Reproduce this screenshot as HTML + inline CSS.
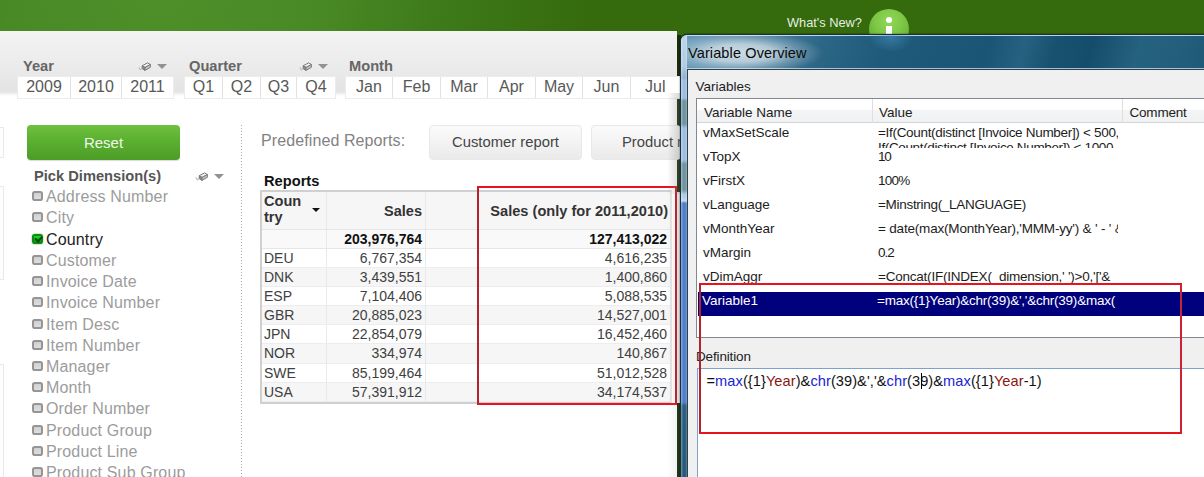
<!DOCTYPE html>
<html><head><meta charset="utf-8">
<style>
*{box-sizing:border-box;margin:0;padding:0}
html,body{width:1204px;height:477px;overflow:hidden}
body{position:relative;font-family:"Liberation Sans",sans-serif;background:#356b0d;}
.abs{position:absolute}
#green{left:0;top:0;width:1204px;height:477px;background:radial-gradient(ellipse 430px 260px at 160px 0px,#4f8f2a 0%,#4a8a26 35%,#3c7718 70%,#356b0d 100%);}
#sheet{left:0;top:31px;width:677px;height:446px;background:#fff;}
#topband{left:0;top:31px;width:677px;height:65px;background:linear-gradient(#f4f4f4 0,#f0f0f0 12px,#eaeaea 40px,#e3e3e3 60px,#e6e6e6 61px,#fff 65px);}
.lbtitle{position:absolute;font-weight:bold;color:#666;font-size:14.67px;line-height:16px;white-space:nowrap}
.cells{position:absolute;top:76px;height:23px;display:flex;border:1px solid #ececec;background:#fff}
.cells div{height:21px;line-height:19.4px;font-size:16px;color:#585858;text-align:center;border-right:1px solid #e2e2e2;background:#fff}
.cells div:last-child{border-right:none}
.tri{position:absolute;width:0;height:0;border-left:5.2px solid transparent;border-right:5.2px solid transparent;border-top:5.2px solid #929292}
.item{position:absolute;left:46px;font-size:16px;color:#9c9c9c;line-height:20px;letter-spacing:.15px;margin-top:.7px;white-space:nowrap}
.cb{position:absolute;left:32.3px;width:10.4px;height:10.4px;border:2px solid #959595;border-radius:2.8px;background:linear-gradient(#d0d0d0,#dedede)}

#reset{left:27px;top:125px;width:153px;height:35px;border-radius:4px;background:linear-gradient(#6fc03f,#5bb030 45%,#4c9c27);color:rgba(255,255,255,.93);font-size:15px;line-height:35.5px;text-align:center;box-shadow:0 1px 1px rgba(0,0,0,.15)}
.cb.on{background:linear-gradient(#16e02a,#0fb01c 55%,#0c9414);border-color:#0c8a12;box-shadow:0 0 1.5px #1aa01a}
.cb.on:after{content:"";position:absolute;left:1.5px;top:-0.6px;width:3.4px;height:5.4px;border-right:2.1px solid #0a450c;border-bottom:2.1px solid #0a450c;transform:rotate(42deg)}
.btn{position:absolute;top:125px;height:35px;border:1px solid #e8e8e8;border-radius:4px;background:linear-gradient(#fbfbfb,#f3f3f3 50%,#eaeaea);font-size:14.8px;line-height:33px;color:#444;text-align:center;white-space:nowrap;overflow:hidden}
#tbl{left:260px;top:190px;width:412px;border:2px solid #d0d0d0;border-right:2px solid #e6e6e6;background:#fff;font-size:14px;color:#404040}
#tbl>div{display:flex;position:relative}
#tbl .c1{width:65px;padding-left:2px;border-right:1px solid #e9e9e9;position:relative}
#tbl .c2{width:99px;text-align:right;padding-right:3px;border-right:1px solid #e9e9e9}
#tbl .c3{flex:1;text-align:right;padding-right:3px}
.hdr{height:37.5px;background:#f6f6f6;font-weight:bold;color:#333;border-bottom:1px solid #e6e6e6}
.tot{height:19px;line-height:19px;background:#f9f9f9;font-weight:bold;color:#111;border-bottom:1px solid #e6e6e6}
.row{height:19.2px;line-height:19px;border-bottom:1px solid #ededed}
.row.alt{background:#f6f6f6}

#whats{left:787px;top:15px;color:rgba(255,255,255,.9);font-size:12.8px;line-height:16px;white-space:nowrap}
#info{left:869px;top:9px;width:40px;height:40px;border-radius:50%;background:radial-gradient(circle at 50% 30%,#92d658 0%,#7ec846 40%,#64ae34 75%,#4f9a26 100%);}
#dlg{left:680px;top:34px;width:530px;height:451px;box-shadow:0 0 1.5px rgba(0,0,0,.8);border:1px solid #1a2f3a;border-radius:7px 0 0 0;background:#1f5876;overflow:hidden}
#tbar{left:0;top:0;width:530px;height:34px;background:linear-gradient(105deg,#8fb5cf 0px,#5f93b3 8px,#2c6686 140px,#1f5a7a 200px,#1b5575 300px,#256181 335px,#185170 365px,#154c6b 400px,#25627f 445px,#235f7d 485px,#1c5674 530px);box-shadow:inset 0 1px 0 rgba(220,235,245,.85),inset 0 -1px 0 rgba(190,215,232,.85)}
#tglow{left:-22px;top:-4px;width:164px;height:44px;background:radial-gradient(closest-side,rgba(255,255,255,.72) 0%,rgba(255,255,255,.6) 40%,rgba(255,255,255,.25) 70%,rgba(255,255,255,0) 100%)}
#ttext{left:7px;top:9px;letter-spacing:.12px;font-size:14.5px;line-height:18px;color:#0a0a0a;white-space:nowrap}
#lborder{left:0;top:1px;width:6px;height:450px;background:linear-gradient(90deg,rgba(255,255,255,.35),rgba(255,255,255,0) 40%,rgba(255,255,255,0) 70%,rgba(255,255,255,.25)),linear-gradient(#bcd5e8 0px,#b0cbe2 30px,#8fb0cf 42px,#9dbde3 44px,#9dbde3 62px,#6f949f 65px,#6f949f 88px,#9dbde3 92px,#9dbde3 124px,#6f949f 128px,#6f949f 154px,#a9c5e6 158px,#c4d6ec 165px,#4f7fcb 167px,#4f7fcb 366px,#2a5f7c 370px,#24587a 450px)}
#client{left:6px;top:34px;width:530px;height:420px;background:#f0f0f0;border:1px solid #30404a;border-right:none;border-bottom:none}
.dl{position:absolute;font-size:13.5px;line-height:16px;color:#1c1c1c;white-space:nowrap}
#lv{left:8px;top:28px;width:521px;height:240px;background:#fff;border:1px solid #828790;border-right:none}
#lvh{left:0;top:0;width:521px;height:24px;background:linear-gradient(#fff 0%,#fff 45%,#f3f4f5 50%,#f0f1f2 100%);border-bottom:1px solid #d5d5d5}
.sep{position:absolute;top:0;width:1px;height:24px;background:#dedfe0}
#sel{left:0px;top:192px;width:521px;height:24px;background:#00007c}
#edit{left:8.5px;top:298px;width:520px;height:130px;background:#fff;border:1px solid #7da2ce;border-right:none;border-bottom:none}
#code{left:9px;top:3px;letter-spacing:.07px;font-size:14.6px;line-height:18px;color:#111;white-space:nowrap}
#code b{font-weight:normal;color:#2024d4}
#code i{font-style:normal;color:#8a1515}
</style></head><body>
<div id="green" class="abs"></div>
<div class="abs" style="left:676px;top:35px;width:5px;height:442px;background:#1b2e0c"></div>
<div id="left" class="abs" style="left:0;top:0;width:680px;height:477px;overflow:hidden">
<div id="sheet" class="abs"></div>
<div id="topband" class="abs"></div>
<div class="abs" style="left:677px;top:192px;width:3px;height:211px;background:#e9e9e9"></div>
<div class="abs" style="left:677px;top:35px;width:3px;height:442px;z-index:-1"></div>

<!-- list boxes -->
<div class="lbtitle" style="left:23px;top:58px">Year</div>
<div class="lbtitle" style="left:189px;top:58px">Quarter</div>
<div class="lbtitle" style="left:349px;top:58px">Month</div>
<div class="cells" style="left:17px;width:157px"><div style="width:53px">2009</div><div style="width:51px">2010</div><div style="width:51px">2011</div></div>
<div class="cells" style="left:184px;width:152px"><div style="width:38px">Q1</div><div style="width:38px">Q2</div><div style="width:36px">Q3</div><div style="width:38px">Q4</div></div>
<div class="cells" style="left:345px;width:336px;border-right:none"><div style="width:47px">Jan</div><div style="width:48px">Feb</div><div style="width:47px">Mar</div><div style="width:48px">Apr</div><div style="width:47px">May</div><div style="width:48px">Jun</div><div style="width:50px;border-right:none;text-align:left;padding-left:14px">Jul</div></div>
<svg class="abs" style="left:138px;top:62px" width="14" height="10" viewBox="0 0 14 10"><path d="M0.8 5.2 L2.3 8 L4.2 6.4" fill="none" stroke="#bdbdbd" stroke-width="1.1"/><path d="M4.2 3.7 L9.6 0.9 L12.4 2.5 L7 5.5 Z" fill="#f2f2f2" stroke="#7a7a7a" stroke-width="1"/><path d="M4.2 3.7 L7 5.5 L7 8.4 L4.2 6.6 Z" fill="#8c8c8c" stroke="#7a7a7a" stroke-width="1"/><path d="M7 5.5 L12.4 2.5 L12.4 5.3 L7 8.4 Z" fill="#c4c4c4" stroke="#7a7a7a" stroke-width="1"/></svg><svg class="abs" style="left:299px;top:62px" width="14" height="10" viewBox="0 0 14 10"><path d="M0.8 5.2 L2.3 8 L4.2 6.4" fill="none" stroke="#bdbdbd" stroke-width="1.1"/><path d="M4.2 3.7 L9.6 0.9 L12.4 2.5 L7 5.5 Z" fill="#f2f2f2" stroke="#7a7a7a" stroke-width="1"/><path d="M4.2 3.7 L7 5.5 L7 8.4 L4.2 6.6 Z" fill="#8c8c8c" stroke="#7a7a7a" stroke-width="1"/><path d="M7 5.5 L12.4 2.5 L12.4 5.3 L7 8.4 Z" fill="#c4c4c4" stroke="#7a7a7a" stroke-width="1"/></svg><svg class="abs" style="left:195px;top:172px" width="14" height="10" viewBox="0 0 14 10"><path d="M0.8 5.2 L2.3 8 L4.2 6.4" fill="none" stroke="#bdbdbd" stroke-width="1.1"/><path d="M4.2 3.7 L9.6 0.9 L12.4 2.5 L7 5.5 Z" fill="#f2f2f2" stroke="#7a7a7a" stroke-width="1"/><path d="M4.2 3.7 L7 5.5 L7 8.4 L4.2 6.6 Z" fill="#8c8c8c" stroke="#7a7a7a" stroke-width="1"/><path d="M7 5.5 L12.4 2.5 L12.4 5.3 L7 8.4 Z" fill="#c4c4c4" stroke="#7a7a7a" stroke-width="1"/></svg>
<div class="tri" style="left:157px;top:64px"></div>
<div class="tri" style="left:318.3px;top:64px"></div>


<!-- left panel -->
<div class="abs" style="left:0;top:127px;width:4px;height:31px;border:1px solid #e9e9e9;border-left:none;background:#fdfdfd"></div>
<div class="abs" style="left:0;top:186px;width:4px;height:94px;border:1px solid #e9e9e9;border-left:none;background:#fdfdfd"></div>
<div class="abs" style="left:0;top:364px;width:4px;height:120px;border:1px solid #e9e9e9;border-left:none;background:#fdfdfd"></div>
<div class="abs" id="reset">Reset</div>
<div class="lbtitle" style="left:34px;top:168px;color:#555">Pick Dimension(s)</div>
<div class="tri" style="left:214px;top:174px"></div>
<div class="cb" style="top:191px"></div><div class="item" style="top:186px">Address Number</div>
<div class="cb" style="top:212px"></div><div class="item" style="top:207px">City</div>
<div class="cb on" style="top:234px"></div><div class="item" style="top:229px;color:#222">Country</div>
<div class="cb" style="top:255px"></div><div class="item" style="top:250px">Customer</div>
<div class="cb" style="top:276px"></div><div class="item" style="top:271px">Invoice Date</div>
<div class="cb" style="top:297px"></div><div class="item" style="top:292px">Invoice Number</div>
<div class="cb" style="top:319px"></div><div class="item" style="top:314px">Item Desc</div>
<div class="cb" style="top:340px"></div><div class="item" style="top:335px">Item Number</div>
<div class="cb" style="top:361px"></div><div class="item" style="top:356px">Manager</div>
<div class="cb" style="top:382px"></div><div class="item" style="top:377px">Month</div>
<div class="cb" style="top:403px"></div><div class="item" style="top:398px">Order Number</div>
<div class="cb" style="top:425px"></div><div class="item" style="top:420px">Product Group</div>
<div class="cb" style="top:446px"></div><div class="item" style="top:441px">Product Line</div>
<div class="cb" style="top:467px"></div><div class="item" style="top:462px">Product Sub Group</div>

<!-- center -->
<div class="abs" style="left:241px;top:125px;height:352px;background:repeating-linear-gradient(#aaa 0,#aaa 1px,transparent 1px,transparent 3px);width:1px"></div>
<div class="abs" style="left:261px;top:131px;font-size:16px;line-height:20px;color:#828282;letter-spacing:0.1px;white-space:nowrap">Predefined Reports:</div>
<div class="btn" style="left:429px;width:153px">Customer report</div>
<div class="btn" style="left:591px;width:90px;text-align:left;padding-left:30px">Product r</div>
<div class="abs" style="left:264px;top:173px;font-weight:bold;font-size:14.67px;line-height:16px;color:#111">Reports</div>
<div id="tbl" class="abs">
 <div class="hdr">
  <div class="c1" style="line-height:16px;padding-top:1px;font-size:14.6px">Coun<br>try<span class="abs" style="left:50px;top:16px;width:0;height:0;border-left:4px solid transparent;border-right:4px solid transparent;border-top:4px solid #111"></span></div>
  <div class="c2" style="line-height:38px;font-size:14.5px">Sales</div>
  <div class="c3" style="line-height:38px;font-size:14.6px;letter-spacing:0;padding-right:2px">Sales (only for 2011,2010)</div>
 </div>
 <div class="tot"><div class="c1"></div><div class="c2">203,976,764</div><div class="c3">127,413,022</div></div>
 <div class="row"><div class="c1">DEU</div><div class="c2">6,767,354</div><div class="c3">4,616,235</div></div>
 <div class="row alt"><div class="c1">DNK</div><div class="c2">3,439,551</div><div class="c3">1,400,860</div></div>
 <div class="row"><div class="c1">ESP</div><div class="c2">7,104,406</div><div class="c3">5,088,535</div></div>
 <div class="row alt"><div class="c1">GBR</div><div class="c2">20,885,023</div><div class="c3">14,527,001</div></div>
 <div class="row"><div class="c1">JPN</div><div class="c2">22,854,079</div><div class="c3">16,452,460</div></div>
 <div class="row alt"><div class="c1">NOR</div><div class="c2">334,974</div><div class="c3">140,867</div></div>
 <div class="row"><div class="c1">SWE</div><div class="c2">85,199,464</div><div class="c3">51,012,528</div></div>
 <div class="row alt"><div class="c1">USA</div><div class="c2">57,391,912</div><div class="c3">34,174,537</div></div>
</div>
<div class="abs" style="left:477px;top:186px;width:199.5px;height:219px;border:2px solid #e6141c;border-left-color:#b4222e;border-right-color:#c41c26"></div>

<div class="abs" style="left:667px;top:93px;width:13px;height:101px;background:linear-gradient(90deg,rgba(120,120,120,0),rgba(120,120,120,.24) 80%)"></div>
<div class="abs" style="left:667px;top:194px;width:13px;height:283px;background:linear-gradient(90deg,rgba(120,120,120,0),rgba(120,120,120,.10) 80%)"></div>
</div>
<!-- header right -->
<div id="whats" class="abs">What's New?</div>
<div id="info" class="abs"><div class="abs" style="left:17px;top:8px;width:6px;height:6px;border-radius:50%;background:#fff"></div><div class="abs" style="left:17.2px;top:16.5px;width:5.6px;height:16px;background:#fff"></div></div>
<!-- dialog -->
<div id="dlg" class="abs">
 <div id="tbar" class="abs"></div>
 <div class="abs" style="left:188px;top:-13px;width:44px;height:30px;background:radial-gradient(closest-side,rgba(80,150,200,.5),rgba(80,150,200,0))"></div>
 <div id="tglow" class="abs"></div>
 <div id="ttext" class="abs">Variable Overview</div>
 <div id="lborder" class="abs"></div>
 <div id="client" class="abs">
  <div class="dl" style="left:7.5px;top:9px">Variables</div>
  <div id="lv" class="abs">
   <div id="lvh" class="abs"><div class="sep" style="left:175px"></div><div class="sep" style="left:425px"></div>
    <div class="dl" style="left:7px;top:5.5px">Variable Name</div><div class="dl" style="left:182px;top:5.5px">Value</div><div class="dl" style="left:432.5px;top:5.5px;letter-spacing:-.2px">Comment</div></div>
   <div class="abs" style="left:1px;top:1px;width:519px;height:238px">
   <div class="dl" style="left:5px;top:25px">vMaxSetScale</div><div class="dl v" style="letter-spacing:-0.310px;left:180px;top:25px;width:239.5px;overflow:hidden">=If(Count(distinct [Invoice Number]) &lt; 500,</div>
   <div class="dl" style="left:5px;top:49px">vTopX</div><div class="dl v" style="letter-spacing:-1.200px;left:180px;top:49px;width:239.5px;overflow:hidden">10</div>
   <div class="dl" style="left:5px;top:73px">vFirstX</div><div class="dl v" style="letter-spacing:-0.730px;left:180px;top:73px;width:239.5px;overflow:hidden">100%</div>
   <div class="dl" style="left:5px;top:97px">vLanguage</div><div class="dl v" style="letter-spacing:-0.300px;left:180px;top:97px;width:239.5px;overflow:hidden">=Minstring(_LANGUAGE)</div>
   <div class="dl" style="left:5px;top:121px">vMonthYear</div><div class="dl v" style="letter-spacing:-0.187px;left:180px;top:121px;width:239.5px;overflow:hidden">= date(max(MonthYear),'MMM-yy') &amp; ' - ' &amp;</div>
   <div class="dl" style="left:5px;top:145px">vMargin</div><div class="dl v" style="letter-spacing:-1.000px;left:180px;top:145px;width:239.5px;overflow:hidden">0.2</div>
   <div class="dl" style="left:5px;top:169px">vDimAggr</div><div class="dl v" style="letter-spacing:-0.220px;left:180px;top:169px;width:239.5px;overflow:hidden">=Concat(IF(INDEX(_dimension,' ')&gt;0,'['&amp;_</div>
   <div class="dl v" style="letter-spacing:-0.360px;left:180px;top:40px;width:239.5px;height:8px;overflow:hidden">If(Count(distinct [Invoice Number]) &lt; 1000,</div>
   <div id="sel" class="abs"><div class="dl" style="left:4px;top:1px;color:#fff">Variable1</div><div class="dl v" style="letter-spacing:-0.227px;left:179px;top:1px;color:#fff">=max({1}Year)&amp;chr(39)&amp;','&amp;chr(39)&amp;max(</div></div>
   </div>
  </div>
  <div class="dl" style="left:8px;top:279px;letter-spacing:-.15px">Definition</div>
  <div id="edit" class="abs"><div id="code" class="abs">=<b>max</b>({1}<i>Year</i>)&amp;<b>chr</b>(39)&amp;','&amp;<b>chr</b>(<span id="c3">3</span>9)&amp;<b>max</b>({1}<i>Year</i>-1)</div>
   <div class="abs" style="left:223.3px;top:4px;width:1px;height:16px;background:#000"></div></div>
 </div>
</div>
<div class="abs" style="left:699px;top:283px;width:483px;height:151px;border:2px solid #e6141c;border-left-color:#b4222e;border-right-color:#cc2236"></div>
</body></html>
